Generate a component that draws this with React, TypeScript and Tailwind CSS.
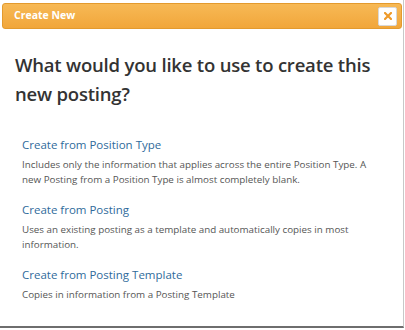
export default function App() {
  const options = [
    {
      title: 'Create from Position Type',
      desc: 'Includes only the information that applies across the entire Position Type. A new Posting from a Position Type is almost completely blank.',
    },
    {
      title: 'Create from Posting',
      desc: 'Uses an existing posting as a template and automatically copies in most information.',
    },
    {
      title: 'Create from Posting Template',
      desc: 'Copies in information from a Posting Template',
    },
  ]

  return (
    <div className="w-[405px] h-[330px] bg-white overflow-hidden" style={{ fontFamily: '"Open Sans", sans-serif' }}>
      <div className="w-[404px] h-[328px] border-r border-r-[#c8c8c8] border-b-2 border-b-[#6e6e6e] pt-[3px] pl-[2px] pr-[1px]">
        <div className="h-[26px] flex items-center justify-between rounded-[3px] border border-[#e39a2e] bg-gradient-to-b from-[#f7b955] to-[#f1a63a] pl-[11px] pr-[4px]">
          <span className="text-white font-bold text-[10.5px]">Create New</span>
          <button className="w-[19px] h-[19px] flex items-center justify-center bg-white border border-[#d8d8d8] rounded-[2px]">
            <svg width="8" height="8" viewBox="0 0 8 8">
              <path d="M1 1L7 7M7 1L1 7" stroke="#ee9a2a" strokeWidth="2.2" strokeLinecap="square" />
            </svg>
          </button>
        </div>

        <h1 className="mt-[21px] ml-[13px] pr-2 text-[18.5px] leading-[29px] tracking-[-0.2px] text-[#333] font-semibold">
          What would you like to use to create this new posting?
        </h1>

        <div className="mt-[29px] ml-[20px] pr-4 flex flex-col gap-[15px]">
          {options.map((o) => (
            <div key={o.title}>
              <div className="text-[11.5px] leading-[16px] text-[#2f6b9b]">{o.title}</div>
              <p className="mt-[5px] text-[9.8px] leading-[14.5px] text-[#555]">{o.desc}</p>
            </div>
          ))}
        </div>
      </div>
    </div>
  )
}
